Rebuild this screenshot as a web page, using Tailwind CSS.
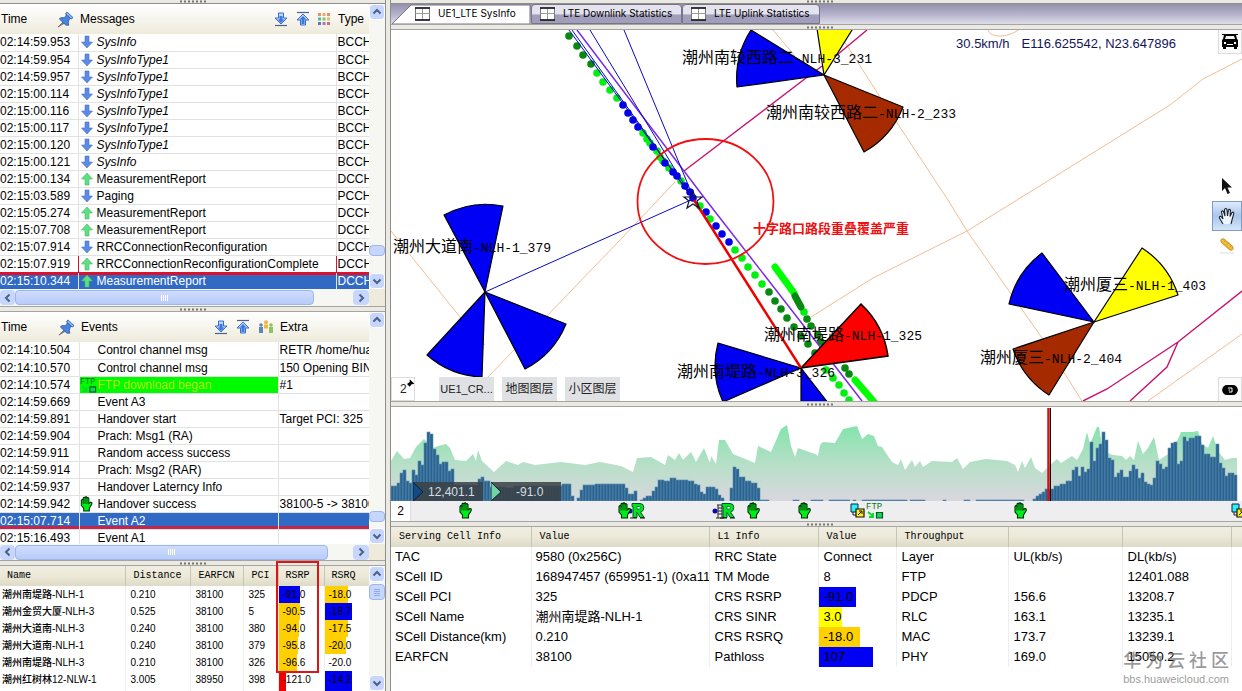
<!DOCTYPE html>
<html lang="zh-CN">
<head>
  <meta charset="UTF-8" />
  <meta name="viewport" content="width=device-width, initial-scale=1.0" />
  <title>LTE Drive Test Analysis</title>
  <script src="https://cdn.jsdelivr.net/npm/@tailwindcss/browser@4"></script>
</head>
<body class="h-screen overflow-hidden bg-[#ebe9e4] text-black text-xs font-['Liberation_Sans','Noto_Sans_CJK_SC',sans-serif]">

  <!-- Shared icons -->
  <svg class="hidden">
    <symbol id="down" viewBox="0 0 12 14"><path d="M4 1h4v6h3.500L6 13 .5 7H4z" fill="#5c8be6" stroke="#4a6fc9" stroke-width=".6" /></symbol>
    <symbol id="up" viewBox="0 0 12 14"><path d="M4 13h4V7h3.500L6 1 .5 7H4z" fill="#5fe080" stroke="#3fb868" stroke-width=".6" /></symbol>
    <symbol id="pin" viewBox="0 0 18 18"><path d="M1 17l6-6 1.500 1.500z" fill="#777" stroke="#777" /><path d="M10 2l6 5-2 1-1 .5-1 3.500.5 3L9.500 15 2.500 8.500 4 7l3.500.2L9.500 5z" fill="#4a84de" stroke="#2452a0" stroke-width=".8" /><path d="M10.500 1L17 7l-2 1.500L9 3z" fill="#8cb8f6" stroke="#2452a0" stroke-width=".8" /></symbol>
    <symbol id="toBottom" viewBox="0 0 14 16"><path d="M4.500 2h5v5H13l-6 6-6-6h3.500z" fill="#bcd5fb" stroke="#3c6cc8" /><path d="M5.500 5h3v3.500h2L7 12 3.500 8.500h2z" fill="#3f78dc" /><path d="M1 14.500h12" stroke="#4a5f9a" stroke-width="1.200" /></symbol>
    <symbol id="toTop" viewBox="0 0 14 16"><path d="M1 1.500h12" stroke="#4a5f9a" stroke-width="1.200" /><path d="M4.500 14h5V9H13L7 3 1 9h3.500z" fill="#bcd5fb" stroke="#3c6cc8" /><path d="M5.500 13h3V8.500h2L7 5 3.500 8.500h2z" fill="#3f78dc" /></symbol>
    <symbol id="palette" viewBox="0 0 12 12">
      <g fill="#e58b7a"><path d="M0 0h3v3H0z" /><path d="M4.500 0h3v3h-3z" fill="#f0a860" /><path d="M9 0h3v3H9z" /></g>
      <g fill="#55b890"><path d="M0 4.500h3v3H0z" /><path d="M4.500 4.500h3v3h-3z" fill="#7cc47c" /><path d="M9 4.500h3v3H9z" fill="#e5bd6a" /></g>
      <g fill="#6a75b5"><path d="M0 9h3v3H0z" /><path d="M4.500 9h3v3h-3z" fill="#a878b0" /><path d="M9 9h3v3H9z" fill="#d46a7a" /></g>
    </symbol>
    <symbol id="people" viewBox="0 0 16 14"><g fill="#f5b544"><circle cx="8" cy="2.200" r="2" /><path d="M6 4.500h4v4H6z" /></g><g fill="#5f86b8"><circle cx="3" cy="5" r="1.800" /><path d="M1 7h4v6H1z" /></g><g fill="#8cc45a"><circle cx="13" cy="5" r="1.800" /><path d="M11 7h4v6h-4z" /></g></symbol>
    <symbol id="hand" viewBox="0 0 13 17"><path d="M1 10V4.500L2 3.500 3 4V2L4 1.200 5 1.800 6 .6 7 1.800 8 1.500 9 2.500V8l2-1.500 1.200.5v1.500L9.500 13v3h-6v-3z" fill="#00ec1a" stroke="#012a05" stroke-width="1.100" /><path d="M3 4v4.500M5 2v6.500M7 2v6.500" stroke="#012a05" stroke-width=".9" /></symbol>
    <symbol id="reg" viewBox="0 0 16 16"><path d="M3 1h8q3.800 0 3.800 4T11.500 9.500l3.700 5.500h-4L8 10v5H4V4H3z" fill="#00e51a" stroke="#053" stroke-width="1" /><path d="M8 4h2.500q.8 0 .8 1.200t-.8 1.300H8z" fill="#eee" stroke="#053" stroke-width=".7" /><path d="M1 15.500h7M11 15.500h5" stroke="#111" /></symbol>
    <symbol id="copy" viewBox="0 0 15 15"><path d="M1 1h7v8H1z" fill="#2cf0f5" stroke="#124" /><path d="M3 9v3h4" fill="none" stroke="#222" /><path d="M6 6h8v8H6z" fill="#ffef20" stroke="#111" stroke-width="1.200" /><path d="M8 12l3.500-3.500M9 8h3v3" fill="none" stroke="#111" /></symbol>
    <symbol id="ftp" viewBox="0 0 18 17"><text x="0" y="7" font-family="Liberation Mono" font-size="9" fill="#067a1c">FTP</text><path d="M2 10l5 4M7 11v4H3" fill="none" stroke="#0d2" stroke-width="1.800" /><path d="M10.500 10.500h6v5.500h-6z" fill="#0cdb48" stroke="#053" stroke-width="1.200" /></symbol>
    <symbol id="chevU" viewBox="0 0 10 10"><path d="M1.500 6.500L5 3l3.500 3.500" fill="none" stroke="#4d6185" stroke-width="2" /></symbol>
    <symbol id="chevD" viewBox="0 0 10 10"><path d="M1.500 3.500L5 7l3.500-3.500" fill="none" stroke="#4d6185" stroke-width="2" /></symbol>
    <symbol id="chevL" viewBox="0 0 10 10"><path d="M6.500 1.500L3 5l3.500 3.500" fill="none" stroke="#4d6185" stroke-width="2" /></symbol>
    <symbol id="chevR" viewBox="0 0 10 10"><path d="M3.500 1.500L7 5 3.500 8.500" fill="none" stroke="#4d6185" stroke-width="2" /></symbol>
    <symbol id="grip" viewBox="0 0 28 3"><path d="M1 1.500h27" stroke="#77756f" stroke-width="2" stroke-dasharray="2 2" /></symbol>
    <symbol id="sheet" viewBox="0 0 15 14"><path d="M.5 1h14v12H.5z" fill="#fff" stroke="#777" /><path d="M7.500 1v12M.5 6.500h14" stroke="#999" /><path d="M0 1h15M0 13h15" stroke="#111" stroke-width="1.500" /></symbol>
  </svg>

  <div class="flex h-full">

    <!-- Left column: messages, events, neighbour cells -->
    <aside class="relative flex w-[386px] shrink-0 flex-col border-r border-[#8f8f88]">
      <div class="flex h-1 items-center justify-center border-b border-[#8f8f88]"><svg class="h-[3px] w-7"><use href="#grip" /></svg></div>

      <section class="flex shrink-0">
        <div class="min-w-0 flex-1">
          <div class="h-[285px] overflow-hidden bg-white">
            <table class="w-full table-fixed">
              <colgroup><col class="w-[78px]" /><col /><col class="w-[33px]" /></colgroup>
              <thead>
                <tr class="h-[30px] bg-linear-to-b from-white to-[#eeebdc] text-left">
                  <th class="p-0 pl-px font-normal"><div class="flex items-center justify-between pr-1"><span>Time</span><svg class="h-[17px] w-[17px]"><use href="#pin" /></svg></div></th>
                  <th class="p-0 pl-0.5 font-normal"><div class="flex items-center gap-2 pr-1.5"><span class="flex-1">Messages</span><svg class="h-4 w-3.5"><use href="#toBottom" /></svg><svg class="h-4 w-3.5"><use href="#toTop" /></svg><svg class="h-3 w-3"><use href="#palette" /></svg></div></th>
                  <th class="p-0 pl-0.5 font-normal">Type</th>
                </tr>
              </thead>
              <tbody id="messages"></tbody>
            </table>
          </div>
          <div class="flex h-[17px] items-center bg-[#f6f6f2]">
            <button aria-label="Scroll left" class="grid h-[15px] w-[15px] place-items-center rounded-sm bg-[#c6d6fc]"><svg class="h-2.5 w-2.5"><use href="#chevL" /></svg></button>
            <div class="flex h-[15px] w-[299px] items-center justify-center gap-px rounded-sm border border-[#9db6ec] bg-linear-to-b from-[#cfdcff] to-[#b8ccf8]"><i class="h-1.5 w-px bg-white"></i><i class="h-1.5 w-px bg-white"></i><i class="h-1.5 w-px bg-white"></i><i class="h-1.5 w-px bg-white"></i></div>
            <button aria-label="Scroll right" class="ml-auto grid h-[15px] w-4 place-items-center rounded-sm bg-[#c6d6fc]"><svg class="h-2.5 w-2.5"><use href="#chevR" /></svg></button>
          </div>
        </div>
        <div class="flex w-4 flex-col bg-[#f6f6f2]">
          <button aria-label="Scroll up" class="grid h-4 place-items-center rounded-sm border border-white bg-[#c6d6fc]"><svg class="h-2.5 w-2.5"><use href="#chevU" /></svg></button>
          <div class="mt-auto mb-[17px] h-[11px] rounded-sm border border-[#9db6ec] bg-[#c6d6fc]"></div>
          <button aria-label="Scroll down" class="grid h-4 place-items-center rounded-sm border border-white bg-[#c6d6fc]"><svg class="h-2.5 w-2.5"><use href="#chevD" /></svg></button>
          <div class="h-[17px] bg-[#eeebdc]"></div>
        </div>
      </section>

      <div class="flex h-1.5 shrink-0 items-center justify-center border-y border-[#a5a59d]"><svg class="h-[3px] w-7"><use href="#grip" /></svg></div>

      <section class="flex shrink-0">
        <div class="min-w-0 flex-1">
          <div class="h-[232px] overflow-hidden bg-white">
            <table class="w-full table-fixed">
              <colgroup><col class="w-[79px]" /><col /><col class="w-[91px]" /></colgroup>
              <thead>
                <tr class="h-[30px] bg-linear-to-b from-white to-[#eeebdc] text-left">
                  <th class="p-0 pl-px font-normal"><div class="flex items-center justify-between pr-1"><span>Time</span><svg class="h-[17px] w-[17px]"><use href="#pin" /></svg></div></th>
                  <th class="p-0 pl-0.5 font-normal"><div class="flex items-center gap-2 pr-1"><span class="flex-1">Events</span><svg class="h-4 w-3.5"><use href="#toBottom" /></svg><svg class="h-4 w-3.5"><use href="#toTop" /></svg><svg class="h-3.5 w-4"><use href="#people" /></svg></div></th>
                  <th class="p-0 pl-0.5 font-normal">Extra</th>
                </tr>
              </thead>
              <tbody id="events"></tbody>
            </table>
          </div>
          <div class="flex h-4 items-center bg-[#f6f6f2]">
            <button aria-label="Scroll left" class="grid h-[15px] w-[15px] place-items-center rounded-sm bg-[#c6d6fc]"><svg class="h-2.5 w-2.5"><use href="#chevL" /></svg></button>
            <div class="flex h-[15px] w-[313px] items-center justify-center gap-px rounded-sm border border-[#9db6ec] bg-linear-to-b from-[#cfdcff] to-[#b8ccf8]"><i class="h-1.5 w-px bg-white"></i><i class="h-1.5 w-px bg-white"></i><i class="h-1.5 w-px bg-white"></i><i class="h-1.5 w-px bg-white"></i></div>
            <button aria-label="Scroll right" class="ml-auto grid h-[15px] w-4 place-items-center rounded-sm bg-[#c6d6fc]"><svg class="h-2.5 w-2.5"><use href="#chevR" /></svg></button>
          </div>
        </div>
        <div class="flex w-4 flex-col bg-[#f6f6f2]">
          <button aria-label="Scroll up" class="grid h-4 place-items-center rounded-sm border border-white bg-[#c6d6fc]"><svg class="h-2.5 w-2.5"><use href="#chevU" /></svg></button>
          <div class="mt-auto mb-1.5 h-[11px] rounded-sm border border-[#9db6ec] bg-[#c6d6fc]"></div>
          <button aria-label="Scroll down" class="grid h-4 place-items-center rounded-sm border border-white bg-[#c6d6fc]"><svg class="h-2.5 w-2.5"><use href="#chevD" /></svg></button>
          <div class="h-4 bg-[#eeebdc]"></div>
        </div>
      </section>

      <div class="flex h-1.5 shrink-0 items-center justify-center border-y border-[#a5a59d]"><svg class="h-[3px] w-7"><use href="#grip" /></svg></div>

      <section class="relative flex min-h-0 flex-1">
        <div class="min-w-0 flex-1 overflow-hidden bg-white">
          <table class="w-full table-fixed text-[10px]">
            <colgroup><col class="w-[125px]" /><col class="w-[65px]" /><col class="w-[53px]" /><col class="w-[35px]" /><col class="w-[46px]" /><col /></colgroup>
            <thead>
              <tr class="h-5 bg-linear-to-b from-[#f0eee2] via-[#ece9d8] to-[#dedac8] text-left font-['Liberation_Mono',monospace]">
                <th class="p-0 pl-[7px] font-normal">Name</th>
                <th class="border-l border-[#c8c5b4] p-0 pl-2 font-normal">Distance</th>
                <th class="border-l border-[#c8c5b4] p-0 pl-2 font-normal">EARFCN</th>
                <th class="border-l border-[#c8c5b4] p-0 pl-2 font-normal">PCI</th>
                <th class="border-l border-[#c8c5b4] p-0 pl-[7px] font-normal">RSRP</th>
                <th class="border-l border-[#c8c5b4] p-0 pl-[7px] font-normal">RSRQ</th>
              </tr>
            </thead>
            <tbody id="cells"></tbody>
          </table>
        </div>
        <div class="flex w-4 flex-col bg-[#f6f6f2]">
          <button aria-label="Scroll up" class="grid h-4 place-items-center rounded-sm border border-white bg-[#c6d6fc]"><svg class="h-2.5 w-2.5"><use href="#chevU" /></svg></button>
          <div class="mt-0.5 flex h-4 flex-col items-center justify-center gap-px rounded-sm border border-[#9db6ec] bg-[#c6d6fc]"><i class="h-px w-1.5 bg-[#8eaae8]"></i><i class="h-px w-1.5 bg-[#8eaae8]"></i><i class="h-px w-1.5 bg-[#8eaae8]"></i><i class="h-px w-1.5 bg-[#8eaae8]"></i></div>
          <button aria-label="Scroll down" class="mt-auto grid h-4 place-items-center rounded-sm border border-white bg-[#c6d6fc]"><svg class="h-2.5 w-2.5"><use href="#chevD" /></svg></button>
        </div>
        <!-- Highlight around RSRP -->
        <div class="pointer-events-none absolute -top-[5px] left-[276px] h-28 w-[43px] border-2 border-[#dd1515]"></div>
      </section>
    </aside>

    <!-- Right column: map, chart, serving cell -->
    <main class="ml-1 flex min-w-0 flex-1 flex-col border-l border-[#8f8f88]">
      <div class="h-1 border-b border-[#8f8f88] pl-[415px]"><svg class="h-[3px] w-7"><use href="#grip" /></svg></div>

      <nav class="flex h-5 bg-linear-to-b from-[#9391ac] via-[#b3b1cc] to-[#dddce8] font-['Inter',sans-serif] text-[10px]">
        <button class="relative flex h-5 w-[140px] items-center gap-2 pl-6">
          <svg class="absolute inset-0 h-full w-full" viewBox="0 0 140 20" preserveAspectRatio="none"><path d="M1 20L20 1h119v19z" fill="#fff" stroke="#77758c" /></svg>
          <svg class="relative h-3.5 w-[15px]"><use href="#sheet" /></svg><span class="relative">UE1_LTE SysInfo</span>
        </button>
        <button class="flex h-5 w-[151px] items-center gap-2 rounded-t border border-[#77758c] bg-linear-to-b from-[#e4e3ee] from-50% to-[#a09eba] to-55% pl-2"><svg class="h-3.5 w-[15px]"><use href="#sheet" /></svg><span>LTE Downlink Statistics</span></button>
        <button class="flex h-5 w-[138px] items-center gap-2 rounded-t border border-[#77758c] bg-linear-to-b from-[#e4e3ee] from-50% to-[#a09eba] to-55% pl-2"><svg class="h-3.5 w-[15px]"><use href="#sheet" /></svg><span>LTE Uplink Statistics</span></button>
      </nav>
      <div class="flex h-1.5 shrink-0 items-center border-y border-[#a5a59d] pl-[415px]"><svg class="h-[3px] w-7"><use href="#grip" /></svg></div>

      <!-- Map -->
      <section class="relative min-h-0 flex-1 overflow-hidden bg-white">
        <svg class="absolute inset-0 h-full w-full" viewBox="391 30 851 371" preserveAspectRatio="xMinYMin slice">
          <g fill="none" stroke="#f3bd93">
            <path d="M391 231L460 317 485 345M675 182L620 240 545 318 488 377M773 30L795 56" />
            <path d="M836 30L848 47 880 97 948 200 967 231 1042 338 1082 401M1242 59L1203 79 1170 105 1017 200 967 231 873 278 811 317M988 30Q990 36 1000 36T1020 29M1242 334L1148 401" />
          </g>
          <g fill="none" stroke="#c8126e" stroke-width="1.400">
            <path d="M684 171L806 78 837 55 867 30M1242 291L1178 342 1107 389 1083 401M1178 342L1167 367 1130 401" />
          </g>
          <g stroke="#000" stroke-width="1.200" stroke-linejoin="round">
            <g fill="#0000f5">
              <path d="M485 292L444 215A88 88 0 0 1 503 206z" />
              <path d="M485 292L566 324A88 88 0 0 1 525 369z" />
              <path d="M485 292L482 377A88 88 0 0 1 427 355z" />
              <path d="M824 75L737 87A90 90 0 0 1 751 30z" />
              <path d="M801 368L723 402A88 88 0 0 1 718 343z" />
              <path d="M801 368V408H832z" />
              <path d="M1094 322L1009 304A88 88 0 0 1 1042 253z" />
            </g>
            <path d="M824 75L816 22H857z" fill="#ff0" />
            <path d="M1094 322L1142 248A88 88 0 0 1 1178 295z" fill="#ff0" />
            <path d="M824 75L903 107A88 88 0 0 1 864 152z" fill="#a52a00" />
            <path d="M1094 322L1049 395A88 88 0 0 1 1013 349z" fill="#a52a00" />
          </g>
          <g id="trail"></g>
          <path d="M775 267L794 293" stroke="#0f0" stroke-width="7" stroke-linecap="round" />
          <path d="M795 296L801 307" stroke="#088a10" stroke-width="7" stroke-linecap="round" />
          <path d="M855 380L875 403" stroke="#0f0" stroke-width="7" stroke-linecap="round" />
          <path d="M577 30L706 200 821 348 862 401" fill="none" stroke="#7a2be2" stroke-width="1.500" />
          <path d="M569 30L693 199M572 30L693 199M590 30L693 199M624 30L694 199M485 292L693 199" stroke="#0a0ac0" />
          <path d="M801 368L861 304A88 88 0 0 1 888 356z" fill="#f00" stroke="#000" stroke-width="1.500" />
          <path d="M694 200L801 368" stroke="#ec0000" stroke-width="2.500" />
          <path d="M693 191l2 6 7 0-5 4 2 7-6-4-6 4 2-7-5-4 7 0z" fill="none" stroke="#111138" stroke-width="1.200" />
          <ellipse cx="705.500" cy="201.500" rx="68" ry="62.500" fill="none" stroke="#f01010" stroke-width="1.800" />
          <g id="siteLabels" class="font-['Liberation_Mono','Noto_Sans_CJK_SC',monospace]" font-size="13"></g>
          <text x="753" y="233" font-size="13" font-weight="700" fill="#ee1111" class="font-['Noto_Sans_CJK_SC',sans-serif]">十字路口路段重叠覆盖严重</text>
        </svg>

        <p class="absolute top-1.5 right-[66px] flex gap-3 text-[13px] leading-4 text-[#141458]"><span>30.5km/h</span><span>E116.625542, N23.647896</span></p>

        <div class="absolute top-0 right-0 flex h-full w-[30px] flex-col items-end">
          <button aria-label="Vehicle view" class="grid h-6 w-6 place-items-center border border-t-0 border-[#ddd] bg-[#fafafa]">
            <svg class="h-4 w-4" viewBox="0 0 16 16"><path d="M0 0h3l1 0h8l1 0h3v1h-2l1 4 1 1v7h-1v2h-3v-2H4v2H1v-2H0V6l1-1 1-4H0z" /><path d="M4 2h8l1 3H3z" fill="#f4f4f4" /><path d="M2 8h2v2H2zM12 8h2v2h-2zM5 10h6v1H5z" fill="#fff" /></svg>
          </button>
          <div class="mt-[121px] flex w-[30px] flex-col items-center">
            <button aria-label="Select" class="grid h-[22px] w-[30px] place-items-center"><svg class="h-4 w-2.5" viewBox="0 0 10 16"><path d="M0 0v13l3-3 2.500 6 2.500-1-2.500-5.500H10z" fill="#111" /></svg></button>
            <button aria-label="Pan" class="mt-1 grid h-[30px] w-[30px] place-items-center border border-[#7f9dc4] bg-linear-to-b from-[#dfeafa] via-[#a9c6ec] to-[#d3e5fa]">
              <svg class="h-[18px] w-[18px]" viewBox="0 0 18 18"><path d="M5 17L1.500 11Q1 9 3 9.500L5 12 3.500 5Q4 3 5.500 4.500L7 9 6.500 2.500Q8 .5 9 2.500L9.500 9 10.500 3Q12 1.500 12.500 3.500L12 9.500 14 5.500Q16 4.500 15.800 6.500L14 13 13 17" fill="#eef4fd" stroke="#1c2430" stroke-width="1.100" /></svg>
            </button>
            <button aria-label="Measure" class="grid h-[30px] w-[30px] place-items-center"><svg class="h-4 w-4" viewBox="0 0 16 16"><path d="M4 3l8 7" stroke="#c4921c" stroke-width="5" stroke-linecap="round" /><path d="M4 3l8 7" stroke="#f0bc3a" stroke-width="3.500" stroke-linecap="round" /><path d="M5 4l2-2M8 6.500l2-2M11 9l2-2" stroke="#d19a22" /><path d="M1 15h14" stroke="#ddd" /></svg></button>
          </div>
          <button aria-label="Layer visibility" class="mt-auto grid h-6 w-6 place-items-center border border-b-0 border-[#ddd] bg-[#fafafa]">
            <svg class="h-3 w-4" viewBox="0 0 16 12"><path d="M0 6Q1 1 5 1h6q4 0 5 5-1 5-5 5H5Q1 11 0 6z" /><path d="M6 4h4v4H7M6.500 6H8" fill="none" stroke="#fff" /></svg>
          </button>
        </div>

        <div class="absolute bottom-0 left-0 flex h-6 gap-2 text-[#222]">
          <button class="mr-4 flex w-6 items-center border border-[#ddd] bg-white pl-2">2<svg class="mb-3 h-2 w-2" viewBox="0 0 8 8"><path d="M0 5l3-2V0l5 5-3 .5L3 8z" /></svg></button>
          <button class="w-[55px] bg-[#e0e1e4] text-[11px]">UE1_CR...</button>
          <button class="w-[55px] bg-[#e0e1e4]">地图图层</button>
          <button class="w-[55px] bg-[#e0e1e4]">小区图层</button>
        </div>
      </section>

      <div class="flex h-1.5 shrink-0 items-center border-y border-[#a5a59d] pl-[415px]"><svg class="h-[3px] w-7"><use href="#grip" /></svg></div>

      <!-- Throughput / RSRP chart -->
      <section class="relative h-[94px] shrink-0 bg-white">
        <svg class="absolute inset-0 h-full w-full" viewBox="0 0 851 94" preserveAspectRatio="none">
          <defs><linearGradient id="area" gradientUnits="userSpaceOnUse" x1="0" y1="16" x2="0" y2="94"><stop offset="0" stop-color="#80e4ab" /><stop offset=".55" stop-color="#b9dfc9" /><stop offset="1" stop-color="#d9d7de" /></linearGradient></defs>
          <path id="rsrpArea" fill="url(#area)" />
          <g id="bars" fill="#2a6392" stroke="#5f8fae" stroke-width=".6"></g>
          <path d="M657.500 1v93" stroke="#c81414" stroke-width="2.500" /><path d="M659.500 1v93" stroke="#200" stroke-width="1" />
        </svg>
        <div class="absolute bottom-0 left-[22px] flex h-[19px] gap-2 text-[#d8dde0]">
          <div class="flex w-[70px] items-center gap-1 bg-[#3a4044]/85"><svg class="h-[19px] w-[11px]" viewBox="0 0 11 19"><path d="M0 0l10 10-10 9z" fill="#134a80" stroke="#0a2038" /></svg><span>12,401.1</span></div>
          <div class="flex w-[70px] items-center gap-3.5 bg-[#3a4044]/85"><svg class="h-[19px] w-[11px]" viewBox="0 0 11 19"><path d="M0 0l10 10-10 9z" fill="#6fd3a4" stroke="#123" /></svg><span>-91.0</span></div>
        </div>
      </section>
      <div class="relative h-5 shrink-0 overflow-hidden bg-[#eeeef0]">
        <button class="h-full w-5 border-r border-[#ddd] bg-white">2</button>
        <svg class="absolute top-0 left-0 h-5 w-[851px]" id="timelineIcons">
          <circle cx="239" cy="10" r="2.500" fill="#0808b0" />
          <circle cx="324" cy="10" r="2.500" fill="#0808b0" />
          <path d="M326 4h6M327 4v13M331 4v13M327 7h4M327 10h4M327 13h4M325 17h8" stroke="#222" fill="none" />
        </svg>
      </div>
      <div class="flex h-1.5 shrink-0 items-center border-y border-[#a5a59d] pl-[415px]"><svg class="h-[3px] w-7"><use href="#grip" /></svg></div>

      <!-- Serving cell details -->
      <section class="relative h-[164px] shrink-0 overflow-hidden bg-white">
        <table class="w-full table-fixed text-[13px]">
          <colgroup><col class="w-[140px]" /><col class="w-[178px]" /><col class="w-[109px]" /><col class="w-[78px]" /><col class="w-28" /><col class="w-[114px]" /><col class="w-[109px]" /><col /></colgroup>
          <thead>
            <tr class="h-5 bg-linear-to-b from-[#f0eee2] via-[#ece9d8] to-[#dedac8] text-left font-['Liberation_Mono',monospace] text-[10px]">
              <th class="p-0 pl-2 font-normal">Serving Cell Info</th>
              <th class="border-l border-[#c8c5b4] p-0 pl-2 font-normal">Value</th>
              <th class="border-l border-[#c8c5b4] p-0 pl-2 font-normal">L1 Info</th>
              <th class="border-l border-[#c8c5b4] p-0 pl-2 font-normal">Value</th>
              <th class="border-l border-[#c8c5b4] p-0 pl-2 font-normal">Throughput</th>
              <th class="border-l border-[#c8c5b4] p-0"></th>
              <th class="border-l border-[#c8c5b4] p-0"></th>
              <th class="border-l border-[#c8c5b4] p-0"></th>
            </tr>
          </thead>
          <tbody id="serving"></tbody>
        </table>
        <div class="absolute right-[13px] bottom-1.5 text-[#777]/75">
          <div class="flex justify-between text-lg leading-6 font-medium"><span>华</span><span>为</span><span>云</span><span>社</span><span>区</span></div>
          <div class="text-[11px] leading-3">bbs.huaweicloud.com</div>
        </div>
      </section>
    </main>
  </div>

  <script>
    const byId = id => document.getElementById(id);

    // time, direction, message, channel
    const messages = [
      ['02:14:59.953', 'down', 'SysInfo', 'BCCH'],
      ['02:14:59.954', 'down', 'SysInfoType1', 'BCCH'],
      ['02:14:59.957', 'down', 'SysInfoType1', 'BCCH'],
      ['02:15:00.114', 'down', 'SysInfoType1', 'BCCH'],
      ['02:15:00.116', 'down', 'SysInfoType1', 'BCCH'],
      ['02:15:00.117', 'down', 'SysInfoType1', 'BCCH'],
      ['02:15:00.120', 'down', 'SysInfoType1', 'BCCH'],
      ['02:15:00.121', 'down', 'SysInfo', 'BCCH'],
      ['02:15:00.134', 'up', 'MeasurementReport', 'DCCH'],
      ['02:15:03.589', 'down', 'Paging', 'PCCH'],
      ['02:15:05.274', 'up', 'MeasurementReport', 'DCCH'],
      ['02:15:07.708', 'up', 'MeasurementReport', 'DCCH'],
      ['02:15:07.914', 'down', 'RRCConnectionReconfiguration', 'DCCH'],
      ['02:15:07.919', 'up', 'RRCConnectionReconfigurationComplete', 'DCCH'],
      ['02:15:10.344', 'up', 'MeasurementReport', 'DCCH'],
    ];
    byId('messages').innerHTML = messages.map(([time, dir, name, type], i) => {
      const selected = i === messages.length - 1;
      const row = selected ? 'h-[17px] bg-[linear-gradient(#e0102a_3px,#316ac5_3px)] text-white' : 'h-[17px]';
      const line = i === messages.length - 2 ? 'border-[#e0102a]' : 'border-[#e2e2e2]';
      const text = name.startsWith('SysInfo') ? 'italic' : '';
      return `<tr class="${row}">
        <td class="border-r border-b ${line} p-0 leading-4">${time}</td>
        <td class="border-r border-b ${line} p-0 pl-0.5 leading-4"><div class="flex items-center gap-1"><svg class="h-3.5 w-3"><use href="#${dir}" /></svg><span class="${text}">${name}</span></div></td>
        <td class="overflow-hidden border-b ${line} p-0 pl-px leading-4">${type}</td></tr>`;
    }).join('');

    // time, event, extra, icon
    const events = [
      ['02:14:10.504', 'Control channel msg', 'RETR /home/huawei', ''],
      ['02:14:10.570', 'Control channel msg', '150 Opening BINARY', ''],
      ['02:14:10.574', 'FTP download began', '#1', 'ftp'],
      ['02:14:59.669', 'Event A3', '', ''],
      ['02:14:59.891', 'Handover start', 'Target PCI: 325', ''],
      ['02:14:59.904', 'Prach: Msg1 (RA)', '', ''],
      ['02:14:59.911', 'Random access success', '', ''],
      ['02:14:59.914', 'Prach: Msg2 (RAR)', '', ''],
      ['02:14:59.937', 'Handover Laterncy Info', '', ''],
      ['02:14:59.942', 'Handover success', '38100-5 -> 38100', 'hand'],
      ['02:15:07.714', 'Event A2', '', ''],
      ['02:15:16.493', 'Event A1', '', ''],
    ];
    byId('events').innerHTML = events.map(([time, name, extra, icon], i) => {
      const row = i === 10 ? 'h-[17px] bg-[#316ac5] text-white shadow-[inset_0_-3px_#c4254c]' : 'h-[17px]';
      const cell = icon === 'ftp' ? 'bg-[#00fb00] text-[#b8e612]' : '';
      const size = icon === 'ftp' ? 'h-4 w-[17px]' : 'h-4 w-[13px]';
      const pic = icon ? `<svg class="${size}"><use href="#${icon}" /></svg>` : '';
      return `<tr class="${row}">
        <td class="border-r border-b border-[#e2e2e2] p-0 leading-4">${time}</td>
        <td class="border-r border-b border-[#e2e2e2] p-0 leading-4 ${cell}"><div class="flex items-center"><span class="flex h-4 w-[18px]">${pic}</span><span>${name}</span></div></td>
        <td class="overflow-hidden border-b border-[#e2e2e2] p-0 pl-px leading-4 whitespace-nowrap">${extra}</td></tr>`;
    }).join('');

    // name, distance, earfcn, pci, rsrp [text, colour, width], rsrq [text, colour, width]
    const cells = [
      ['潮州南堤路-NLH-1', '0.210', '38100', '325', ['-91.0', '#0000f0', 21], ['-18.0', '#ffd000', 23]],
      ['潮州金贸大厦-NLH-3', '0.525', '38100', '5', ['-90.5', '#ffd000', 21], ['-18.7', '#0000f0', 27]],
      ['潮州大道南-NLH-3', '0.240', '38100', '380', ['-94.0', '#ffd000', 20], ['-17.5', '#ffd000', 23]],
      ['潮州大道南-NLH-1', '0.240', '38100', '379', ['-95.8', '#ffd000', 19], ['-20.0', '#ffd000', 21]],
      ['潮州南堤路-NLH-3', '0.210', '38100', '326', ['-96.6', '#ffd000', 18], ['-20.0', '#ffd000', 0]],
      ['潮州红树林12-NLW-1', '3.005', '38950', '398', ['-121.0', '#f00000', 7], ['-14.2', '#0000f0', 27]],
      ['', '', '', '', ['', '#f00000', 7], ['', '#0000f0', 27]],
    ];
    const meter = ([text, color, width]) => `<td class="border-l border-[#eee] p-0"><div class="relative h-[17px] pl-1 leading-[17px]">
      <div class="absolute inset-y-0 left-0" style="background:${color};width:${width}px"></div><span class="relative">${text}</span></div></td>`;
    byId('cells').innerHTML = cells.map(([name, dist, freq, pci, rsrp, rsrq]) => `<tr class="h-[17px]">
      <td class="p-0 pl-0.5 leading-4 font-medium whitespace-nowrap">${name}</td>
      <td class="border-l border-[#eee] p-0 pl-[5px] leading-4">${dist}</td>
      <td class="border-l border-[#eee] p-0 pl-[5px] leading-4">${freq}</td>
      <td class="border-l border-[#eee] p-0 pl-[5px] leading-4">${pci}</td>
      ${meter(rsrp)}${meter(rsrq)}</tr>`).join('');

    const serving = [
      ['TAC', '9580 (0x256C)', 'RRC State', ['Connect', '', 0], 'Layer', 'UL(kb/s)', 'DL(kb/s)'],
      ['SCell ID', '168947457 (659951-1) (0xa11', 'TM Mode', ['8', '', 0], 'FTP', '', '12401.088'],
      ['SCell PCI', '325', 'CRS RSRP', ['-91.0', '#0000f5', 37], 'PDCP', '156.6', '13208.7'],
      ['SCell Name', '潮州南堤路-NLH-1', 'CRS SINR', ['3.0', '#ffff00', 23], 'RLC', '163.1', '13235.1'],
      ['SCell Distance(km)', '0.210', 'CRS RSRQ', ['-18.0', '#ffd000', 41], 'MAC', '173.7', '13239.1'],
      ['EARFCN', '38100', 'Pathloss', ['107', '#0000f5', 54], 'PHY', '169.0', '15050.2'],
    ];
    byId('serving').innerHTML = serving.map(([a, b, c, [text, color, width], d, e, f]) => `<tr class="h-5">
      <td class="p-0 pl-1 leading-5">${a}</td>
      <td class="overflow-hidden border-l border-[#eee] p-0 pl-1 leading-5 whitespace-nowrap">${b}</td>
      <td class="border-l border-[#eee] p-0 pl-[5px] leading-5">${c}</td>
      <td class="border-l border-[#eee] p-0"><div class="relative h-5 pl-[5px] leading-5"><div class="absolute inset-y-0 left-0" style="background:${color};width:${width}px"></div><span class="relative">${text}</span></div></td>
      <td class="border-l border-[#eee] p-0 pl-[5px] leading-5">${d}</td>
      <td class="border-l border-[#eee] p-0 pl-[5px] leading-5">${e}</td>
      <td class="border-l border-[#eee] p-0 pl-[5px] leading-5">${f}</td>
      <td class="border-l border-[#eee] p-0"></td></tr>`).join('');

    // Drive route, one dot per sample
    const route = {
      '#088a10': [[569,36],[577,46],[583,55],[591,64],[769,292],[775,301],[781,309],[787,318],[794,327],[801,336],[808,344],[815,353],[807,319],[811,326],[818,335],[821,342],[845,368],[849,374]],
      '#00f010': [[597,73],[603,82],[610,90],[617,98],[643,133],[647,139],[650,143],[657,151],[660,157],[663,161],[669,168],[681,181],[700,206],[710,219],[735,250],[742,258],[748,267],[755,275],[762,284],[804,312],[826,370],[833,378],[839,385],[844,393],[849,400]],
      '#0000f0': [[623,105],[628,113],[633,120],[638,127],[653,147],[665,163],[673,172],[677,176],[685,186],[690,192],[693,198],[706,212],[716,226],[722,234],[729,242]],
    };
    byId('trail').innerHTML = Object.entries(route).map(([color, dots]) =>
      dots.map(([x, y]) => `<circle cx="${x}" cy="${y}" r="3.8" fill="${color}"/>`).join('')).join('');

    const sites = [
      [393, 252, '潮州大道南', '-NLH-1_379'],
      [682, 63, '潮州南较西路二', '-NLH-3_231'],
      [766, 118, '潮州南较西路二', '-NLH-2_233'],
      [764, 340, '潮州南堤路', '-NLH-1_325'],
      [677, 377, '潮州南堤路', '-NLH-3_326'],
      [1064, 290, '潮州厦三', '-NLH-1_403'],
      [980, 363, '潮州厦三', '-NLH-2_404'],
    ];
    byId('siteLabels').innerHTML = sites.map(([x, y, name, code]) =>
      `<text x="${x}" y="${y}"><tspan font-size="16">${name}</tspan><tspan>${code}</tspan></text>`).join('');

    // RSRP outline as x, height pairs
    const area = [0,40,6,50,13,42,19,43,25,54,33,62,42,53,47,55,55,57,59,53,64,41,75,40,82,47,85,40,87,51,91,40,103,29,115,40,127,36,132,39,144,36,170,39,194,36,209,39,230,35,242,29,246,43,260,44,274,36,277,46,284,41,288,48,292,41,300,49,305,39,313,53,319,38,320,45,325,37,328,61,334,61,342,47,364,38,367,55,380,49,390,72,396,76,400,55,404,44,407,53,424,47,427,45,429,56,432,59,444,58,452,72,466,75,471,62,477,67,483,65,487,55,491,54,501,39,507,36,510,42,514,31,521,41,524,34,529,40,532,34,541,40,561,39,566,43,572,32,579,39,595,42,616,40,624,36,627,29,631,40,634,33,640,44,644,33,651,28,659,36,666,42,670,38,681,45,686,41,692,52,696,69,699,57,706,74,708,74,712,50,722,46,731,45,735,41,739,45,743,41,747,60,752,47,757,53,763,64,768,41,782,50,790,69,801,69,807,70,811,57,817,53,822,65,827,50,834,41,841,43,846,43];
    let d = 'M0 94';
    for (let i = 0; i < area.length; i += 2) d += `L${area[i]} ${94 - area[i + 1]}`;
    byId('rsrpArea').setAttribute('d', d + 'V94z');

    // Throughput: start x and height, held until the next start
    const steps = [0,15,6,18,9,28,12,31,15,20,18,18,21,31,24,26,27,40,30,36,33,58,36,69,39,67,42,52,45,46,48,37,51,39,57,30,60,32,63,16,87,22,90,24,93,20,99,14,114,13,123,15,171,17,180,5,183,0,186,3,189,11,192,16,204,17,234,13,237,7,243,10,246,0,249,1,252,3,255,5,261,10,264,14,267,21,273,20,279,23,285,21,297,20,303,17,306,16,309,9,312,7,315,14,321,14,324,12,327,6,330,3,333,0,339,13,342,34,345,32,348,24,354,20,360,18,366,13,369,1,378,0,402,1,408,0,420,1,432,0,438,1,459,0,462,1,465,0,469,1,516,0,519,1,534,0,552,1,555,0,573,1,579,0,585,1,633,0,642,2,645,5,648,7,651,9,654,12,663,15,669,17,675,20,681,31,684,34,687,25,690,34,693,29,696,32,699,59,702,40,705,53,708,57,711,69,714,61,717,43,720,41,723,24,726,28,729,31,732,24,738,30,741,36,744,32,747,23,750,28,753,19,756,17,759,16,762,23,765,40,768,37,771,32,774,34,777,53,780,58,783,59,786,37,789,40,792,64,795,60,798,63,804,65,810,56,813,47,819,44,825,57,828,38,831,33,834,25,837,28,843,26];
    let bars = '';
    for (let x = 0, i = 0; x < 846; x += 3) {
      while (steps[i + 2] <= x) i += 2;
      const h = steps[i + 1];
      if (h) bars += `<rect x="${x}" y="${94 - h}" width="3" height="${h}"/>`;
    }
    byId('bars').innerHTML = bars;

    const marks = [['hand', 68, 13], ['hand', 227, 13], ['reg', 238, 16], ['reg', 328, 16], ['hand', 356, 13], ['hand', 407, 13], ['copy', 459, 15], ['ftp', 475, 18], ['hand', 623, 13], ['copy', 840, 15]];
    byId('timelineIcons').insertAdjacentHTML('beforeend', marks.map(([icon, x, w]) =>
      `<use href="#${icon}" x="${x}" y="1" width="${w}" height="17"/>`).join(''));
  </script>
</body>
</html>
